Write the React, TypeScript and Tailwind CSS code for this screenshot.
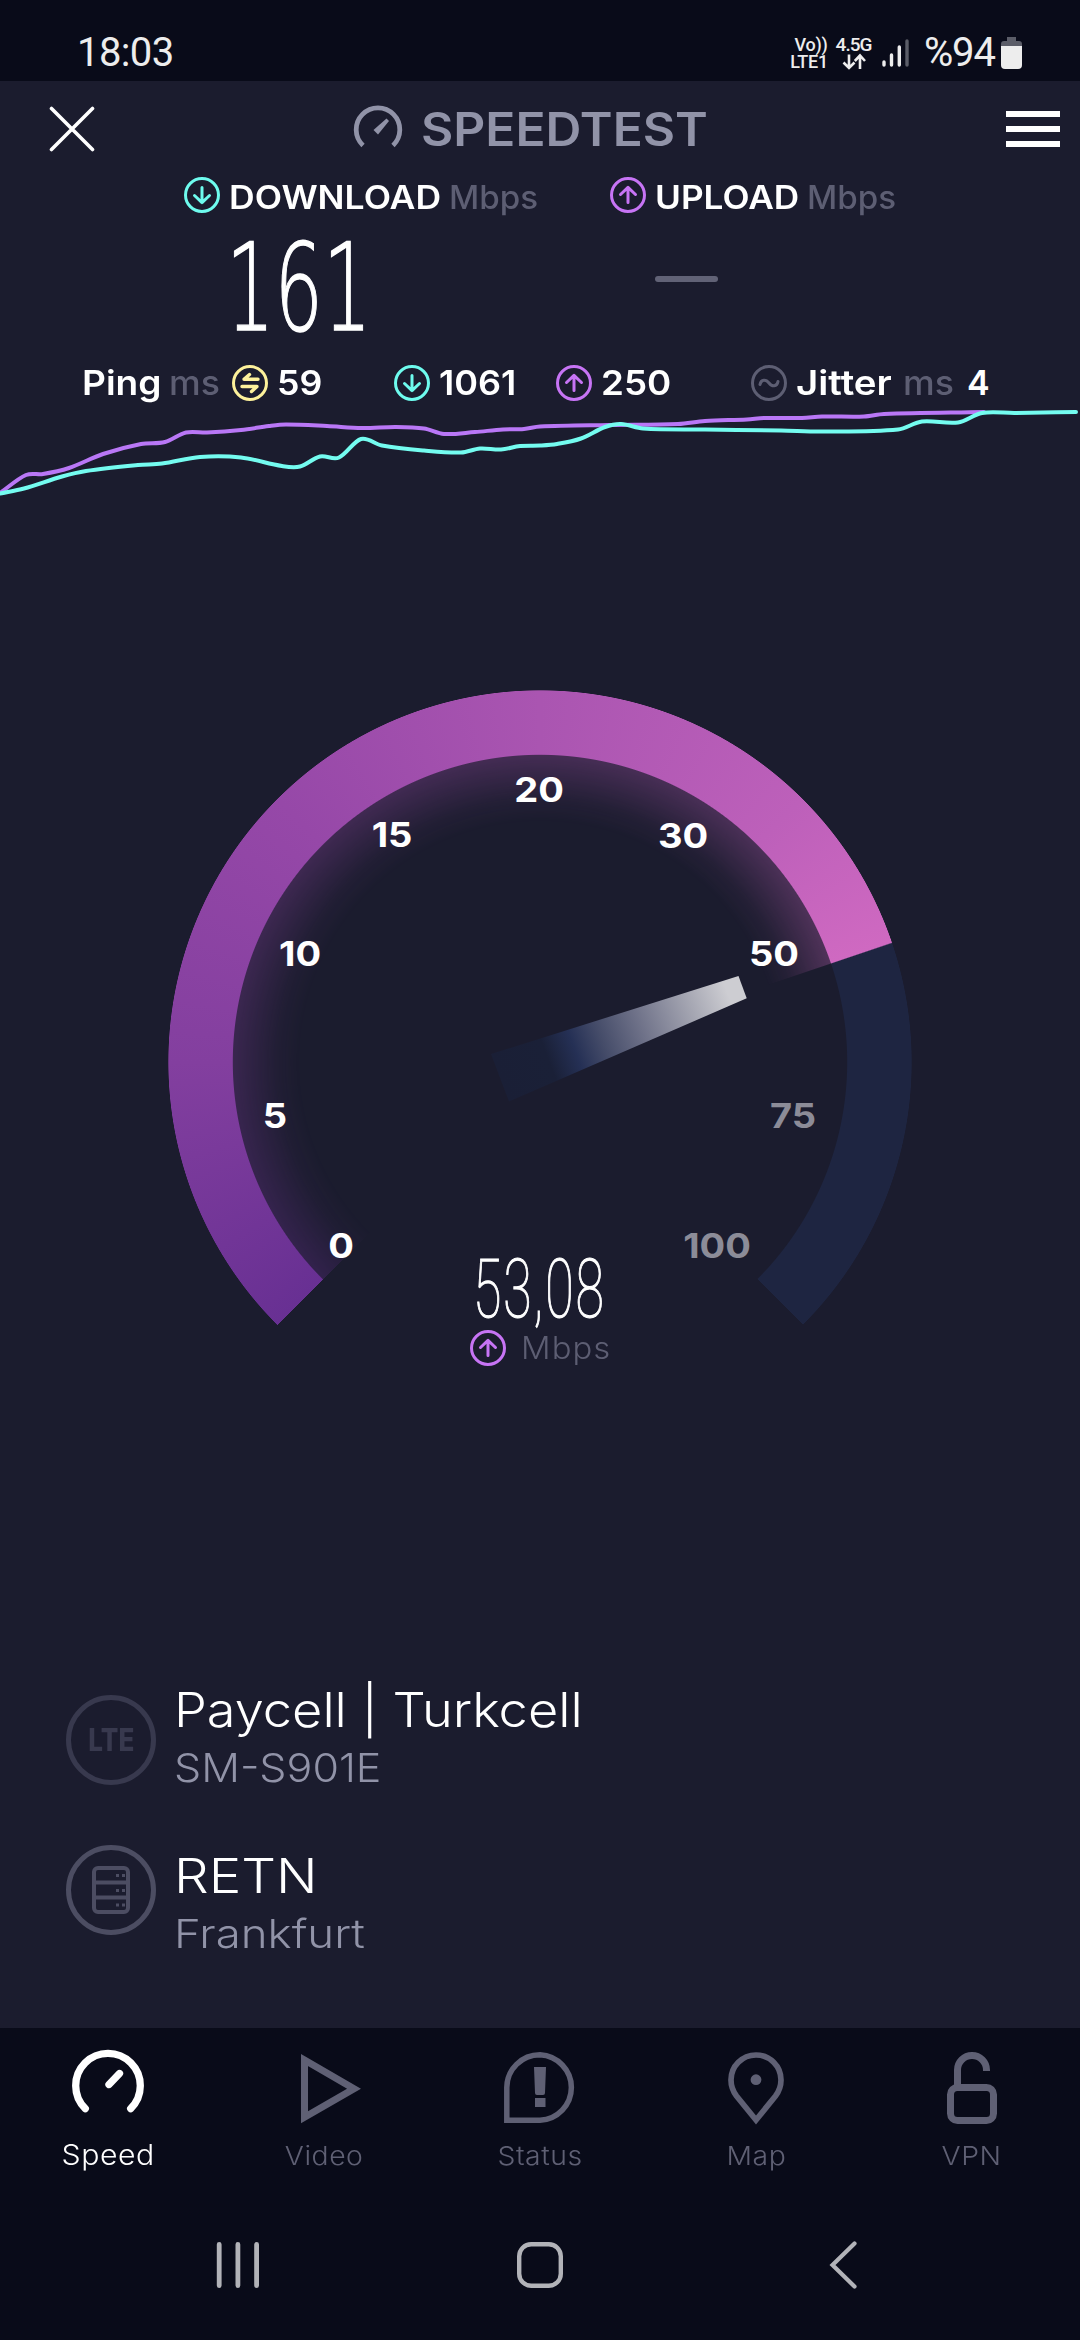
import type { ReactNode } from "react";

type Point = [number, number];

// Points of the history chart, in px inside a 1080x100 box
const uploadLine: Point[] = [
  [0, 92], [26, 74], [43, 73], [69, 67], [103, 53], [141, 43], [165, 41], [186, 31.5],
  [207, 31.5], [241, 29], [269, 25], [286, 23.5], [327, 25], [362, 27], [396, 26],
  [424, 27.5], [444, 33], [475, 31], [503, 28.5], [524, 28], [540, 25.5], [609, 24],
  [678, 23], [705, 20], [747, 18.5], [764, 17], [802, 17], [822, 15.5], [864, 15.5],
  [884, 13], [984, 11],
];

const downloadLine: Point[] = [
  [0, 92.5], [24, 87.5], [62, 75.5], [86, 70], [138, 64], [162, 62.5], [200, 56],
  [241, 56.5], [282, 65], [300, 65.5], [320, 55.5], [339, 56.5], [361, 38], [382, 44.5],
  [424, 49.5], [461, 51.5], [480, 47.5], [501, 48.5], [520, 45], [540, 44.5], [557, 43],
  [581, 37.5], [605, 26], [621, 23], [643, 27.5], [705, 28.5], [781, 29.5], [822, 30.5],
  [898, 28.5], [922, 20.5], [958, 21.5], [982, 12], [1015, 12], [1076, 11],
];

function smooth(points: Point[]) {
  return points
    .map(([x, y], i) => {
      if (i === 0) return `M${x} ${y}`;
      const [px, py] = points[i - 1];
      const before = points[i - 2] ?? points[i - 1];
      const after = points[i + 1] ?? points[i];
      const dx = (x - px) / 3;
      const s1 = (y - before[1]) / (x - before[0]);
      const s2 = (after[1] - py) / (after[0] - px);
      return `C${px + dx} ${py + dx * s1} ${x - dx} ${y - dx * s2} ${x} ${y}`;
    })
    .join(" ");
}

const gaugeLabels = [
  { value: "0", x: 173, y: 555.5 },
  { value: "5", x: 107, y: 425.5 },
  { value: "10", x: 132, y: 263.5 },
  { value: "15", x: 224, y: 144.5 },
  { value: "20", x: 371, y: 99.5 },
  { value: "30", x: 515, y: 146 },
  { value: "50", x: 606, y: 263.5 },
  { value: "75", x: 625, y: 425.5, off: true },
  { value: "100", x: 549, y: 555.5, off: true },
];

function Ring({ className, children }: { className: string; children: ReactNode }) {
  return (
    <svg
      viewBox="0 0 36 36"
      className={`size-9 shrink-0 ${className}`}
      fill="none"
      stroke="currentColor"
      strokeWidth="3"
      strokeLinecap="round"
      strokeLinejoin="round"
    >
      <circle cx="18" cy="18" r="16.5" />
      {children}
    </svg>
  );
}

function DownIcon() {
  return (
    <Ring className="text-[#6efbee]">
      <path d="M18 10.5v15M10.5 18.5l7.5 7.2 7.5-7.2" />
    </Ring>
  );
}

function UpIcon() {
  return (
    <Ring className="text-[#c774f5]">
      <path d="M18 25.5v-15M10.5 17.5l7.5-7.2 7.5 7.2" />
    </Ring>
  );
}

function StatusBar() {
  return (
    <div className="flex h-[81px] items-center bg-[#090b19] pt-[25px] font-[Roboto,sans-serif] text-[#ededed]">
      <span className="ml-[77px] w-[713px] text-[40px] leading-none tracking-[-0.6px]">18:03</span>
      <div className="flex w-[38px] flex-col items-center text-[18px] leading-[17px] font-medium tracking-[-0.3px]">
        <span className="ml-1 whitespace-nowrap">Vo))</span>
        <span>LTE1</span>
      </div>
      <div className="ml-[7px] flex w-[37px] flex-col items-center text-[19px] leading-[17px] font-medium tracking-[-1px]">
        <span>4.5G</span>
        <svg width="24" height="17" viewBox="0 0 24 17" fill="none" stroke="currentColor" strokeWidth="2.6">
          <path d="M7 1.5v13M1.5 9.5L7 15l5.5-5.5M18 16V3M12.8 8L18 2.5 23 8" />
        </svg>
      </div>
      <svg className="ml-[9px]" width="28" height="30" viewBox="0 0 28 30" stroke="currentColor" strokeWidth="3.4" strokeLinecap="round">
        <path d="M3 24v3M10.5 17v10M18.3 9v18" />
        <path d="M26 3v24" stroke="#5b5d68" />
      </svg>
      <span className="ml-[15px] w-[74px] text-[40px] leading-none tracking-[-1.2px]">%94</span>
      <svg className="ml-[3px]" width="22" height="32" viewBox="0 0 22 32">
        <path d="M6 0h9v4h3q3 0 3 3v3H0V7q0-3 3-3h3z" fill="#5b5d68" />
        <path d="M0 9h21v19q0 4-4 4H4q-4 0-4-4z" fill="#ededed" />
      </svg>
    </div>
  );
}

function Header() {
  return (
    <header className="flex h-24 items-center">
      <svg className="ml-[49px]" width="46" height="46" viewBox="0 0 46 46" stroke="white" strokeWidth="3.6" strokeLinecap="round">
        <path d="M2.5 2.5l41 41M43.5 2.5l-41 41" />
      </svg>
      <svg className="ml-[258px]" width="50" height="50" viewBox="0 0 50 50" fill="none">
        <path d="M10 41.5A21.8 21.8 0 1 1 40 41.5" stroke="#9193a8" strokeWidth="4.8" />
        <path d="M33.5 14.5l2.5 2.5-11 13.5-4.500-4.500z" fill="#9193a8" />
      </svg>
      <span className="ml-[18px] w-[585px] text-[46px] leading-none font-semibold text-[#9193a8]">
        <span className="inline-block origin-left scale-x-[1.08]">SPEEDTEST</span>
      </span>
      <div className="flex w-[54px] flex-col gap-[9px]">
        <i className="h-1.5 bg-white" />
        <i className="h-1.5 bg-white" />
        <i className="h-1.5 bg-white" />
      </div>
    </header>
  );
}

function Results() {
  return (
    <section>
      <div className="flex h-9 pl-[184px] text-[32px] leading-[41px]">
        <DownIcon />
        <span className="ml-[9px] w-[220px] font-semibold">
          <span className="inline-block origin-left scale-x-[1.11]">DOWNLOAD</span>
        </span>
        <span className="w-[161px] font-medium text-[#5d5e73]">
          <span className="inline-block origin-left scale-x-[1.035]">Mbps</span>
        </span>
        <UpIcon />
        <span className="ml-[9px] w-[152px] font-semibold">
          <span className="inline-block origin-left scale-x-[1.1]">UPLOAD</span>
        </span>
        <span className="font-medium text-[#5d5e73]">
          <span className="inline-block origin-left scale-x-[1.035]">Mbps</span>
        </span>
      </div>
      <div className="flex h-[152px] items-center">
        <div className="ml-[226px] w-[429px] pb-[3px]">
          <span className="inline-block origin-left scale-x-[0.625] font-['DejaVu_Sans',sans-serif] text-[122px] leading-none font-extralight [-webkit-text-stroke:1.4px_white]">
            161
          </span>
        </div>
        <i className="mb-[20px] h-1.5 w-[63px] rounded-full bg-[#616276]" />
      </div>
      <div className="flex h-9 text-[34px] leading-9 font-semibold">
        <span className="ml-[82px] w-[87px]">
          <span className="inline-block origin-left scale-x-[1.09]">Ping</span>
        </span>
        <span className="w-[63px] font-medium text-[#5d5e73]">
          <span className="inline-block origin-left scale-x-[1.05]">ms</span>
        </span>
        <Ring className="text-[#fdf19b]">
          <path d="M26 14.3H12l5.5-4.8M10 21.5h15l-5.5 5" strokeWidth="3.4" />
        </Ring>
        <span className="ml-[9px] w-[117px]">
          <span className="inline-block origin-left scale-x-[1.05]">59</span>
        </span>
        <DownIcon />
        <span className="ml-[9px] w-[117px]">
          <span className="inline-block origin-left scale-x-[1.06]">1061</span>
        </span>
        <UpIcon />
        <span className="ml-[9px] w-[150px]">
          <span className="inline-block origin-left scale-x-[1.08]">250</span>
        </span>
        <Ring className="text-[#5d5e73]">
          <path d="M9 19.5c1-5.500 6-5.500 9-1.500s8 4 9-1.500" />
        </Ring>
        <span className="ml-[9px] w-[107px]">
          <span className="inline-block origin-left scale-x-[1.13]">Jitter</span>
        </span>
        <span className="w-[64px] font-medium text-[#5d5e73]">
          <span className="inline-block origin-left scale-x-[1.05]">ms</span>
        </span>
        <span>4</span>
      </div>
      <svg width="1080" height="100" viewBox="0 0 1080 100" fill="none" strokeWidth="4" strokeLinecap="round">
        <path d={smooth(uploadLine)} stroke="#b977f6" />
        <path d={smooth(downloadLine)} stroke="#74fcf0" />
      </svg>
    </section>
  );
}

function Gauge() {
  return (
    <section className="relative mx-auto mt-[189px] flex h-[677px] w-[744px] flex-col items-center justify-end overflow-hidden">
      {/* Inner glow */}
      <div className="absolute top-0 left-0 size-[744px] bg-[conic-gradient(from_225deg,#683093_0deg,#833f9f_45deg,#9648a8_90deg,#aa55b1_135deg,#bd60ba_180deg,#cf69c1_206.2deg,transparent_206.4deg)] mask-[radial-gradient(circle,transparent_240px,rgba(0,0,0,0.06)_262px,rgba(0,0,0,0.3)_308px,transparent_308px)]" />
      {/* Dial */}
      <div className="absolute top-0 left-0 size-[744px] bg-[conic-gradient(from_225deg,#683093_0deg,#833f9f_45deg,#9648a8_90deg,#aa55b1_135deg,#bd60ba_180deg,#cf69c1_206.2deg,#1e2541_206.4deg,#1e2541_269.9deg,transparent_270deg)] mask-[radial-gradient(circle,transparent_306.7px,black_307.7px,black_371.3px,transparent_372px)]" />
      <svg className="absolute top-0 left-0" width="744" height="677" viewBox="0 0 744 677">
        <defs>
          <linearGradient id="needle" gradientUnits="userSpaceOnUse" x1="332" y1="388" x2="574" y2="297">
            <stop offset="0" stopColor="#1a1f36" />
            <stop offset="0.2" stopColor="#1a2037" />
            <stop offset="0.31" stopColor="#253055" />
            <stop offset="0.42" stopColor="#454c69" />
            <stop offset="0.58" stopColor="#6f7289" />
            <stop offset="0.79" stopColor="#a6a7b3" />
            <stop offset="0.94" stopColor="#cdcdd2" />
          </linearGradient>
        </defs>
        <path d="M323 364L570.5 286L578.7 308.3L341 411.5Z" fill="url(#needle)" />
        {gaugeLabels.map((label) => (
          <text
            key={label.value}
            transform={`translate(${label.x} ${label.y + 12}) scale(1.12 1)`}
            textAnchor="middle"
            className={label.off ? "fill-[#8c8c98] text-[34px] font-bold" : "fill-white text-[34px] font-bold"}
          >
            {label.value}
          </text>
        ))}
      </svg>
      <div className="h-[80px] w-[134px]">
        <span className="inline-block origin-left scale-x-[0.64] font-[Roboto,sans-serif] text-[81px] leading-[80px] font-thin tracking-[3px] whitespace-nowrap [-webkit-text-stroke:1.2px_white]">
          53,08
        </span>
      </div>
      <div className="mb-px flex h-9 w-[140px] items-center">
        <UpIcon />
        <span className="mb-[2px] ml-[15px] inline-block origin-left scale-x-[1.06] text-[31px] leading-none font-light tracking-[1px] text-[#5d5e73]">
          Mbps
        </span>
      </div>
    </section>
  );
}

function Connection() {
  return (
    <section className="mt-[311px] ml-[66px] flex flex-col gap-[40px] pt-2">
      <div className="flex h-[110px]">
        <div className="mt-[9px] flex size-[90px] items-center justify-center rounded-full border-[5px] border-[#38394e] text-[31px] font-extrabold text-[#38394e]">
          <span className="scale-x-[0.84]">LTE</span>
        </div>
        <div className="mt-[-5px] ml-[18px]">
          <p className="w-fit origin-left scale-x-[1.09] text-[48px] leading-[58px] font-[350]">Paycell | Turkcell</p>
          <p className="w-fit origin-left scale-x-[1.075] text-[40px] leading-[57px] font-light text-[#9193a8]">SM-S901E</p>
        </div>
      </div>
      <div className="flex h-[110px]">
        <svg className="mt-[8px]" width="90" height="92" viewBox="1 0 90 92" fill="none" stroke="#4c4d62" strokeWidth="4">
          <circle cx="46" cy="46" r="42.5" strokeWidth="5" />
          <rect x="29" y="24" width="34" height="44" rx="4" />
          <path d="M29 38.5h34M29 53.5h34" />
          <path d="M51 31.5h3M57 31.5h3M51 46.5h3M57 46.5h3M51 61h3M57 61h3" strokeWidth="3" />
        </svg>
        <div className="mt-[11px] ml-[18px]">
          <p className="w-fit origin-left scale-x-[1.14] text-[48px] leading-[58px] font-[350]">RETN</p>
          <p className="w-fit origin-left scale-x-[1.14] text-[40px] leading-[57px] font-light text-[#9193a8]">Frankfurt</p>
        </div>
      </div>
    </section>
  );
}

function Tab({ label, active, children }: { label: string; active?: boolean; children: ReactNode }) {
  return (
    <div className={`flex flex-col items-center ${active ? "text-white" : "text-[#5f6074]"}`}>
      <svg width="80" height="80" viewBox="0 0 80 80" fill="none" stroke="currentColor">
        {children}
      </svg>
      <span
        className={
          active
            ? "mt-[11px] scale-x-[1.08] text-[28px] leading-[32px] font-[350] tracking-[0.5px]"
            : "mt-[12px] scale-x-[1.09] text-[26px] leading-[32px] font-light tracking-[0.5px]"
        }
      >
        {label}
      </span>
    </div>
  );
}

function TabBar() {
  return (
    <nav className="grid h-[172px] grid-cols-5 bg-[#090b19] pt-[20px]">
      <Tab label="Speed" active>
        <g strokeWidth="7.3" strokeLinecap="round">
          <path d="M17.3 60.7A32.3 32.3 0 1 1 62.7 60.7" />
          <path d="M41 36.5L51.5 25.5" />
        </g>
      </Tab>
      <Tab label="Video">
        <path d="M20.5 12L70 40.7L20.5 69.3Z" strokeWidth="7" />
      </Tab>
      <Tab label="Status">
        <path d="M6.8 72.3V39.5A33.2 32.8 0 0 1 40 6.8A33.2 32.8 0 0 1 40 72.3Z" strokeWidth="5.5" />
        <path d="M34 19h12l-1 26q0 2-2 2h-6q-2 0-2-2zM35 50h10.5v9H35z" fill="currentColor" stroke="none" />
      </Tab>
      <Tab label="Map">
        <path d="M40 72L20.5 48C16 42 15 37 15 32a25 25 0 0 1 50 0C65 37 64 42 59.5 48Z" strokeWidth="5.7" />
        <circle cx="40" cy="31.7" r="5.4" fill="currentColor" stroke="none" />
      </Tab>
      <Tab label="VPN">
        <g strokeWidth="7">
          <rect x="18.5" y="39.5" width="43" height="33" rx="7" />
          <path d="M25.5 38V22a14.5 14.5 0 0 1 29 0v1" />
        </g>
      </Tab>
    </nav>
  );
}

function SystemBar() {
  return (
    <div className="flex h-[140px] items-start bg-[#090b19] pt-[41px]">
      <svg className="ml-[214px]" width="48" height="48" viewBox="0 0 48 48" stroke="#b2b3b8" strokeWidth="4.8" strokeLinecap="round">
        <path d="M5.2 3.5v41M23.9 3.5v41M42.6 3.5v41" />
      </svg>
      <svg className="ml-[254px]" width="48" height="48" viewBox="0 0 48 48" fill="none" stroke="#b2b3b8" strokeWidth="4.4">
        <rect x="3.2" y="3.2" width="41.6" height="41.6" rx="12" />
      </svg>
      <svg className="ml-[264px]" width="30" height="48" viewBox="0 0 30 48" fill="none" stroke="#b2b3b8" strokeWidth="4.2" strokeLinecap="round">
        <path d="M26.5 2.5L4.5 24L26.5 45.5" />
      </svg>
    </div>
  );
}

export default function App() {
  return (
    <main className="flex h-[2340px] w-[1080px] flex-col overflow-hidden bg-[#1b1c2e] font-[Inter,sans-serif] text-white">
      <StatusBar />
      <Header />
      <Results />
      <Gauge />
      <Connection />
      <div className="mt-auto">
        <TabBar />
        <SystemBar />
      </div>
    </main>
  );
}
